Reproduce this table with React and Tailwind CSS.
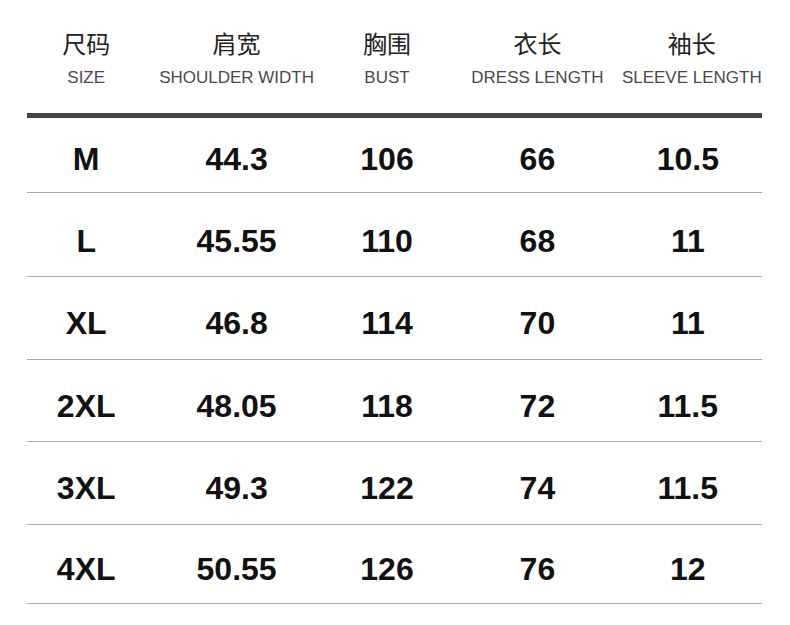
import React from 'react';

const headers = [
  { zh: '尺码', en: 'SIZE', cls: '' },
  { zh: '肩宽', en: 'SHOULDER WIDTH', cls: '' },
  { zh: '胸围', en: 'BUST', cls: '' },
  { zh: '衣长', en: 'DRESS LENGTH', cls: '' },
  { zh: '袖长', en: 'SLEEVE LENGTH', cls: 'pl-[8px]' },
];

// row heights/padding measured off the reference (lines aren't perfectly even)
const rows = [
  { cells: ['M', '44.3', '106', '66', '10.5'], box: 'h-[74px] pt-[25px]' },
  { cells: ['L', '45.55', '110', '68', '11'], box: 'h-[83px] pt-[32px]' },
  { cells: ['XL', '46.8', '114', '70', '11'], box: 'h-[82px] pt-[30px]' },
  { cells: ['2XL', '48.05', '118', '72', '11.5'], box: 'h-[81px] pt-[30px]' },
  { cells: ['3XL', '49.3', '122', '74', '11.5'], box: 'h-[82px] pt-[30px]' },
  { cells: ['4XL', '50.55', '126', '76', '12'], box: 'h-[78px] pt-[28px]' },
];

export default function App() {
  return (
    <div className="w-[790px] h-[625px] bg-white overflow-hidden">
      <div className="h-[113px] pt-[31px] ml-[11px] w-[752px] grid grid-cols-5">
        {headers.map((h) => (
          <div key={h.en} className={`flex flex-col items-center ${h.cls}`}>
            <div className="text-[24px] leading-[24px] text-[#222] font-['Noto_Sans_CJK_SC',sans-serif]">
              {h.zh}
            </div>
            <div className="mt-[13px] text-[17px] leading-[20px] text-[#4a4a4a] whitespace-nowrap font-['Liberation_Sans',Arial,sans-serif]">
              {h.en}
            </div>
          </div>
        ))}
      </div>

      <div className="ml-[27px] w-[735px] h-[5px] bg-[#404348]" />

      {rows.map((r, i) => (
        <div key={i}>
          <div className={`ml-[11px] w-[752px] grid grid-cols-5 box-border ${r.box}`}>
            {r.cells.map((c, j) => (
              <div
                key={j}
                className="text-center text-[32px] leading-[32px] font-bold text-[#111] font-['Liberation_Sans',Arial,sans-serif]"
              >
                {c}
              </div>
            ))}
          </div>
          <div className="ml-[27px] w-[735px] h-px bg-[#a8a8a8]" />
        </div>
      ))}
    </div>
  );
}
